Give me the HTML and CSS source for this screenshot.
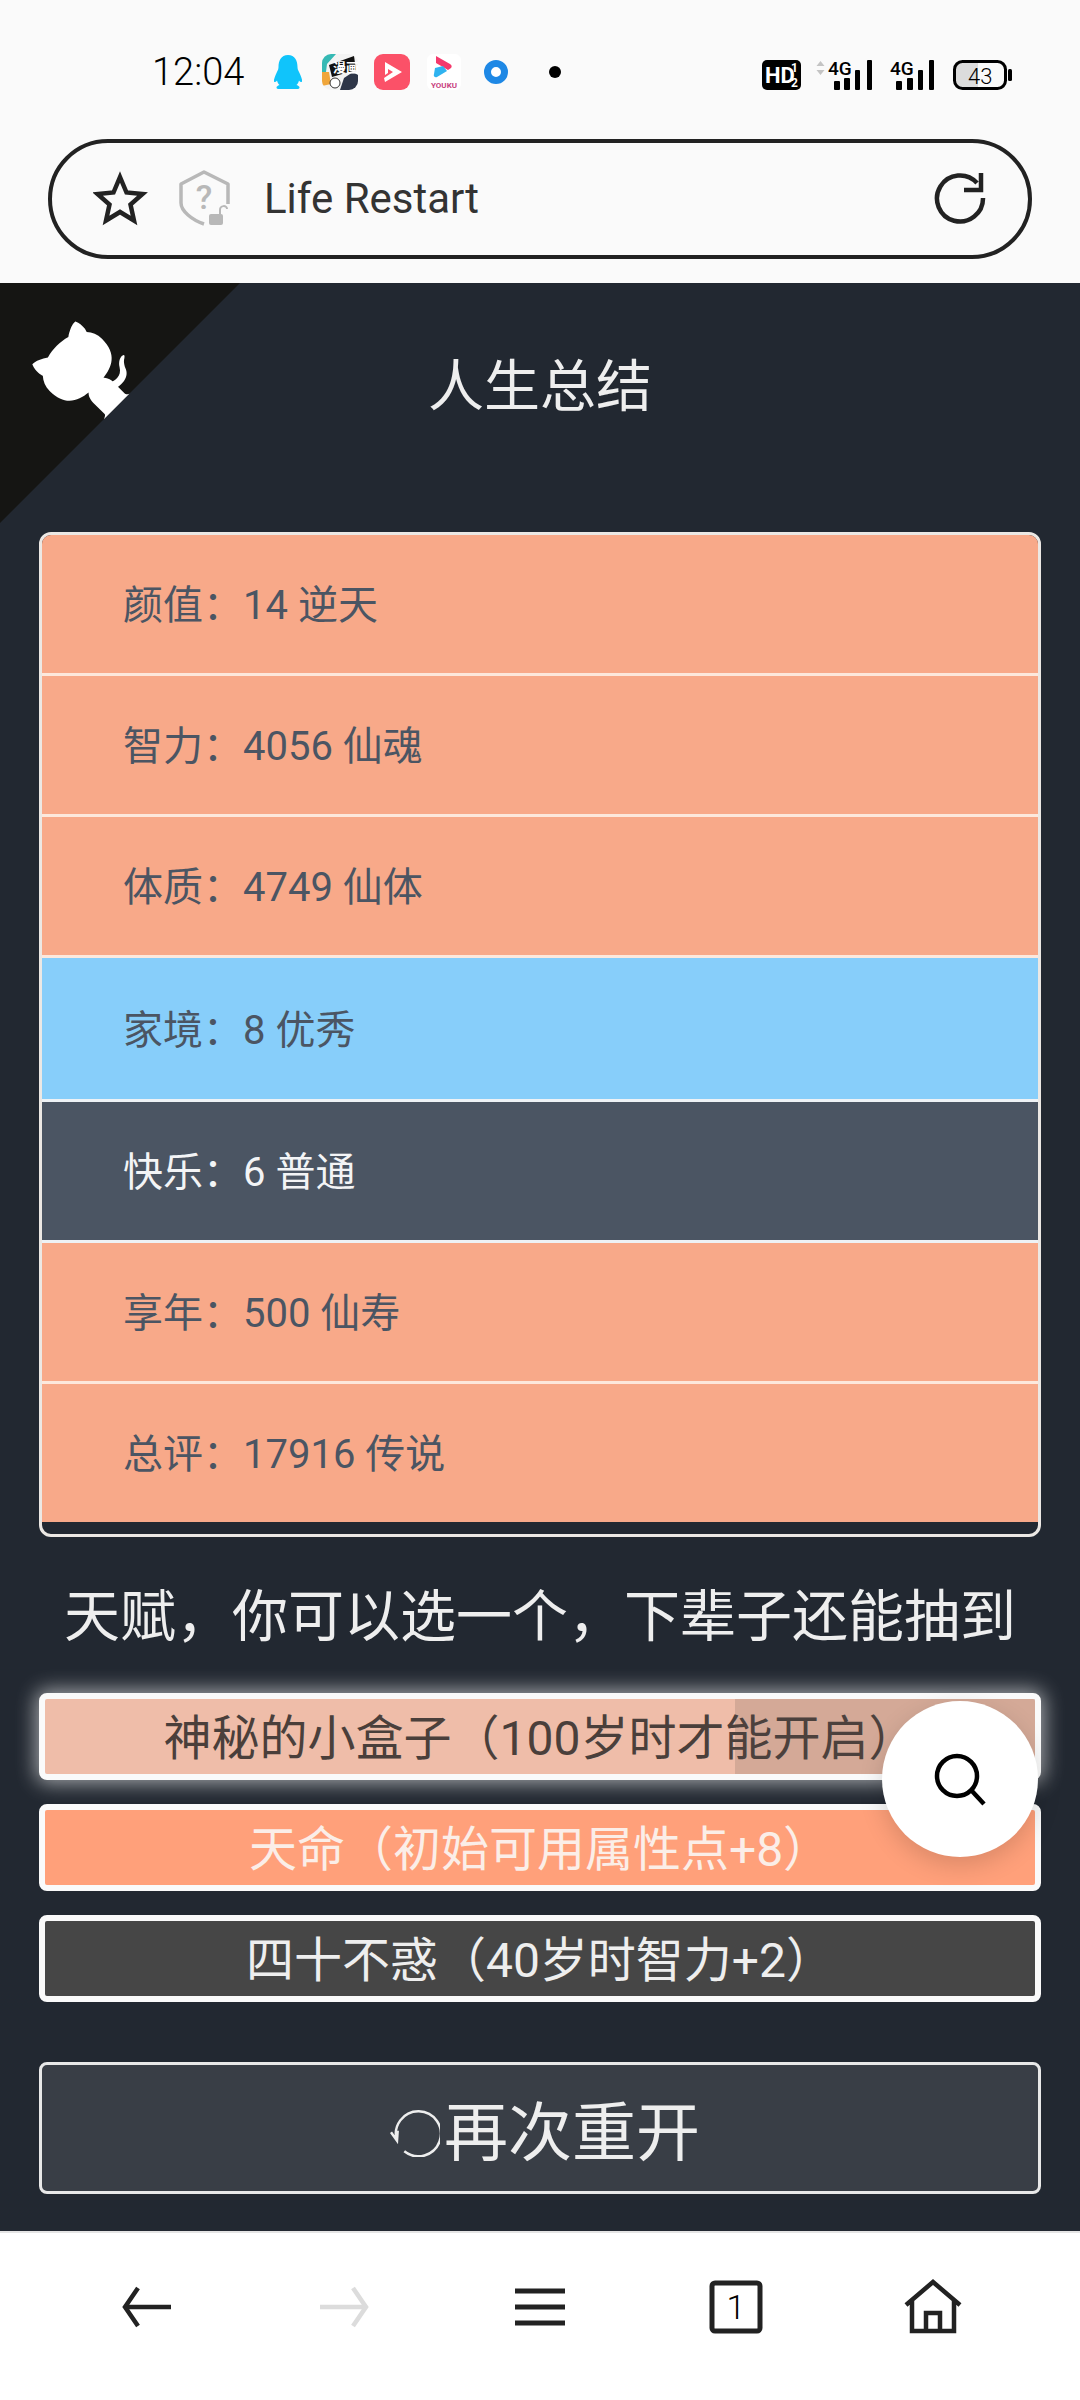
FILE: index.html
```html
<!DOCTYPE html>
<html lang="zh-CN">
<head>
    <meta charset="UTF-8">
    <meta name="viewport" content="width=device-width, initial-scale=1.0">
    <title>Life Restart</title>
    <link rel="stylesheet" href="styles.css">
</head>
<body>
    <div class="phone">
        <div class="top">
            <!-- barra de status -->
            <div class="status-bar">
                <span class="clock">12:04</span>
                <div class="notify-icons">
                    <svg class="ic-qq" width="30" height="34" viewBox="0 0 30 34">
                        <path fill="#10c4fb" d="M15 0c7 0 9.500 6 9.500 12 0 2 .5 3 2 6 1.500 3.500 3 7 2.500 8.500-.5 1-2 .5-3-1-.5 2-1.500 3.500-2.500 4.500 2 .7 3 1.500 3 2.500 0 1-1 1.500-3 1.500H6.500c-2 0-3-.5-3-1.500s1-1.800 3-2.500c-1-1-2-2.500-2.500-4.500-1 1.500-2.500 2-3 1-.5-1.500 1-5 2.500-8.500 1.500-3 2-4 2-6C5.500 6 8 0 15 0z"/>
                    </svg>
                    <svg class="ic-manga" width="36" height="36" viewBox="0 0 36 36">
                        <defs><clipPath id="mangaClip"><rect width="36" height="36" rx="9"/></clipPath></defs>
                        <g clip-path="url(#mangaClip)">
                            <rect width="36" height="36" fill="#f3f3f3"/>
                            <path fill="#35b9b4" d="M0 0h14L5 10l-1 8H0z"/>
                            <path fill="#f0a63a" d="M0 18h7l2 12-9 2z"/>
                            <path fill="#2e3648" d="M18 36l4-12 9-6 5 3v15z"/>
                            <path fill="#111" d="M7 11l25-9 2 14-24 7z"/>
                            <circle cx="13" cy="29" r="5" fill="#fff" stroke="#333"/>
                            <text x="11" y="18" class="manga-text">漫画</text>
                        </g>
                    </svg>
                    <svg class="ic-video" width="36" height="36" viewBox="0 0 36 36">
                        <rect width="36" height="36" rx="9" fill="#fb5168"/>
                        <path fill="#fff" d="M11 8l17 10-17 10-1-4 9-6-5-3v4l-3 2z"/>
                    </svg>
                    <svg class="ic-youku" width="34" height="36" viewBox="0 0 34 36">
                        <rect width="34" height="36" rx="6" fill="#fff"/>
                        <path fill="#f5396c" d="M9 2l14 8c2 1 2 3 1 4l-3 2L9 9z"/>
                        <path fill="#2fb3f0" d="M8 14l8-2 4 5-10 6c-2 1-4-1-3-3z"/>
                        <text x="17" y="34" class="youku-text">YOUKU</text>
                    </svg>
                    <svg class="ic-ring" width="24" height="24" viewBox="0 0 24 24">
                        <circle cx="12" cy="12" r="8.500" fill="#fff" stroke="#1e88e5" stroke-width="7"/>
                    </svg>
                    <span class="dot"></span>
                </div>
                <div class="system-icons">
                    <svg class="ic-hd" width="39" height="30" viewBox="0 0 39 30">
                        <rect width="39" height="30" rx="5" fill="#000"/>
                        <text x="3" y="23" class="hd-text">HD</text>
                        <text x="29" y="12" class="hd-small">1</text>
                        <text x="29" y="27" class="hd-small">2</text>
                    </svg>
                    <svg class="signal-a" width="57" height="36" viewBox="0 -6 57 36">
                        <path fill="#c4c4c4" d="M4.500 1l4 5h-8zM4.500 15l4-5h-8z"/>
                        <text x="12" y="15" class="net-text">4G</text>
                        <rect x="18" y="21" width="6" height="9" rx="1"/>
                        <rect x="28" y="18" width="6" height="12" rx="1"/>
                        <rect x="39" y="10" width="5" height="20" rx="1"/>
                        <rect x="51" y="0" width="5" height="30" rx="1"/>
                    </svg>
                    <svg class="signal-b" width="45" height="36" viewBox="0 -6 45 36">
                        <text x="0" y="15" class="net-text">4G</text>
                        <rect x="6" y="21" width="6" height="9" rx="1"/>
                        <rect x="17" y="18" width="6" height="12" rx="1"/>
                        <rect x="28" y="10" width="5" height="20" rx="1"/>
                        <rect x="39" y="0" width="5" height="30" rx="1"/>
                    </svg>
                    <svg class="battery" width="59" height="30" viewBox="0 0 59 30">
                        <path fill="#dcdcdc" d="M3 3h22v24H3z"/>
                        <rect x="1.500" y="1.500" width="51" height="27" rx="8" fill="none" stroke="#000" stroke-width="3"/>
                        <rect x="55" y="9" width="4" height="12" rx="1.500"/>
                        <text x="15" y="24" class="battery-text">43</text>
                    </svg>
                </div>
            </div>

            <!-- barra de endereco -->
            <div class="url-bar">
                <svg class="ic-star" width="56" height="56" viewBox="0 0 56 56">
                    <path fill="none" stroke="#222" stroke-width="4.500" stroke-miterlimit="10" d="M27 7l6.500 15.500 16 1.500-12 10.500 3.500 16L27 42l-14 8.500 3.500-16L4.500 24l16-1.500z"/>
                </svg>
                <svg class="ic-shield" width="52" height="56" viewBox="0 0 52 56">
                    <path fill="none" stroke="#b8b8b8" stroke-width="3.500" stroke-linejoin="round" d="M49 34V14L25 2 2 14v19c0 8 11 17 23 21"/>
                    <text x="25" y="39" class="shield-text">?</text>
                    <rect x="30" y="44" width="14" height="11" rx="2" fill="#b8b8b8"/>
                    <path fill="none" stroke="#b8b8b8" stroke-width="2" d="M41 44v-4c0-5 7-5 7-1"/>
                </svg>
                <span class="url-text">Life Restart</span>
                <svg class="ic-reload" width="54" height="54" viewBox="0 0 54 54">
                    <path fill="none" stroke="#222" stroke-width="4.500" d="M44 12A23 23 0 1 0 50 27M48 2v17H31"/>
                </svg>
            </div>
        </div>

        <!-- pagina do jogo -->
        <div class="page">
            <svg class="corner" width="240" height="240" viewBox="0 0 250 250">
                <g transform="translate(250 0) scale(-1 1)">
                    <path fill="#151513" d="M0,0 L250,250 L250,0 Z"/>
                    <path fill="#fff" d="M128.3,109.0 C113.8,99.7 119.0,89.6 119.0,89.6 C122.0,82.7 120.5,78.6 120.5,78.6 C119.2,72.0 123.4,76.3 123.4,76.3 C127.3,80.9 125.5,87.3 125.5,87.3 C122.9,97.6 130.6,101.9 134.4,103.2"/>
                    <path fill="#fff" d="M115.0,115.0 C114.9,115.1 118.7,116.5 119.8,115.4 L133.7,101.6 C136.9,99.2 139.9,98.4 142.2,98.6 C133.8,88.0 127.5,74.4 143.8,58.0 C148.5,53.4 154.0,51.2 159.7,51.0 C160.3,49.4 163.2,43.6 171.4,40.1 C171.4,40.1 176.1,42.5 178.8,56.2 C183.1,58.6 187.2,61.8 190.9,65.4 C194.5,69.0 197.7,73.2 200.1,77.6 C213.8,80.2 216.3,84.9 216.3,84.9 C212.7,93.1 206.9,96.0 205.4,96.6 C205.1,102.4 203.0,107.8 198.3,112.5 C181.9,128.9 168.3,122.5 157.7,114.1 C157.9,116.9 156.7,120.9 152.7,124.9 L141.0,136.5 C139.8,137.7 141.6,141.9 141.8,141.8 Z"/>
                </g>
            </svg>

            <h1 class="title">人生总结</h1>

            <ul class="summary">
                <li class="row peach">颜值：14 逆天</li>
                <li class="row peach">智力：4056 仙魂</li>
                <li class="row peach">体质：4749 仙体</li>
                <li class="row blue">家境：8 优秀</li>
                <li class="row slate">快乐：6 普通</li>
                <li class="row peach">享年：500 仙寿</li>
                <li class="row peach">总评：17916 传说</li>
            </ul>

            <h2 class="subtitle">天赋，你可以选一个，下辈子还能抽到</h2>

            <div class="talents">
                <div class="talent talent-box">神秘的小盒子（100岁时才能开启）</div>
                <div class="talent talent-orange">天命（初始可用属性点+8）</div>
                <div class="talent talent-dark">四十不惑（40岁时智力+2）</div>
            </div>

            <button class="again">
                <svg width="60" height="60" viewBox="0 0 60 60">
                    <path fill="none" stroke="#eee" stroke-width="2.500" d="M24.300 54.300A22.500 22.500 0 1 0 17 43.700M11 35.300l6 8.400.7-10"/>
                </svg>
                <span>再次重开</span>
            </button>

            <div class="fab">
                <svg width="54" height="54" viewBox="0 0 54 54">
                    <circle cx="24" cy="24" r="20" fill="none" stroke="#000" stroke-width="4.500"/>
                    <path stroke="#000" stroke-width="4.500" d="M38 38l13 14"/>
                </svg>
            </div>
        </div>

        <!-- navegacao -->
        <div class="bottom-nav">
            <svg width="56" height="56" viewBox="0 0 56 56">
                <path fill="none" stroke="#222" stroke-width="4.500" d="M52 28H6M19 9L6 28l13 19"/>
            </svg>
            <svg width="56" height="56" viewBox="0 0 56 56">
                <path fill="none" stroke="#dcdcdc" stroke-width="4.500" d="M4 28h46M37 9l13 19-13 19"/>
            </svg>
            <svg width="56" height="56" viewBox="0 0 56 56">
                <path fill="none" stroke="#222" stroke-width="5" d="M3 12h50M3 28h50M3 44h50"/>
            </svg>
            <svg width="56" height="56" viewBox="0 0 56 56">
                <rect x="4" y="4" width="48" height="48" rx="3" fill="none" stroke="#222" stroke-width="5"/>
                <text x="28" y="40" class="tab-count">1</text>
            </svg>
            <svg width="60" height="56" viewBox="0 0 60 56">
                <path fill="none" stroke="#222" stroke-width="4.500" d="M3 26L30 3l27 23M9 22v30h42V22M23 52V34h14v18"/>
            </svg>
        </div>
    </div>
</body>
</html>
```

FILE: styles.css
```css
* {
    margin: 0;
    padding: 0;
    box-sizing: border-box;
}
html, body {
    width: 1080px;
    height: 2400px;
    overflow: hidden;
    font-family: Roboto, "Noto Sans CJK SC", sans-serif;
    background-color: #fff;
}
.phone {
    display: flex;
    flex-direction: column;
    height: 2400px;
}
.top {
    flex: none;
    height: 283px;
    background-color: #fafafa;
}

/* status */
.status-bar {
    height: 139px;
    display: flex;
    align-items: center;
    padding: 4px 68px 0 152px;
}
.clock {
    font-size: 38px;
    font-weight: 300;
    color: #000;
    width: 121px;
}
.notify-icons {
    display: flex;
    align-items: center;
}
.ic-manga {
    margin-left: 19px;
}
.ic-video {
    margin-left: 16px;
}
.ic-youku {
    margin-left: 17px;
}
.ic-ring {
    margin-left: 23px;
}
.dot {
    width: 12px;
    height: 12px;
    margin-left: 41px;
    background: #000;
    border-radius: 50%;
}
.system-icons {
    display: flex;
    align-items: flex-end;
    margin-left: auto;
}
.signal-a {
    margin-left: 15px;
}
.signal-b {
    margin-left: 17px;
}
.battery {
    margin-left: 18px;
}
.manga-text {
    font-size: 13px;
    font-weight: 700;
    fill: #fff;
}
.youku-text {
    font-size: 8px;
    font-weight: 700;
    text-anchor: middle;
    fill: #c8437f;
}
.hd-text {
    font-size: 22px;
    font-weight: 700;
    fill: #fff;
}
.hd-small {
    font-size: 12px;
    font-weight: 700;
    fill: #fff;
}
.net-text {
    font-size: 19px;
    font-weight: 500;
    fill: #000;
}
.battery-text {
    font-size: 22px;
    font-weight: 300;
    fill: #000;
}

/* url */
.url-bar {
    height: 120px;
    margin: 0 48px;
    border: 4px solid #222;
    border-radius: 60px;
    display: flex;
    align-items: center;
    padding: 0 41px 2px;
}
.ic-shield {
    margin-left: 30px;
}
.url-text {
    margin-left: 33px;
    font-size: 42px;
    color: #333;
}
.ic-reload {
    margin-left: auto;
}
.shield-text {
    font-size: 34px;
    font-weight: 500;
    text-anchor: middle;
    fill: #b8b8b8;
}

/* pagina */
.page {
    flex: 1;
    position: relative;
    background-color: #222831;
    padding: 62px 39px 0;
    overflow: hidden;
}
.corner {
    position: absolute;
    top: 0;
    left: 0;
}
.title {
    font-size: 56px;
    font-weight: 400;
    line-height: 84px;
    text-align: center;
    color: #eeeeee;
    margin-bottom: 103px;
}
.summary {
    list-style: none;
    border: 3px solid #ece8e4;
    border-radius: 12px;
    padding-bottom: 12px;
    overflow: hidden;
}
.row {
    height: 141px;
    display: flex;
    align-items: center;
    padding: 0 0 5px 81px;
    font-size: 40px;
    color: #4b5563;
    border-bottom: 3px solid #fde8dc;
}
.row:last-child {
    height: 138px;
    border-bottom: none;
}
.row.blue {
    height: 144px;
    padding-bottom: 3px;
    border-bottom-color: #eef2f5;
}
.peach {
    background-color: #f8a989;
}
.blue {
    background-color: #87cefa;
}
.slate {
    background-color: #4b5563;
    color: #f3f4f6;
    border-bottom-color: #eef2f5;
}
.subtitle {
    margin-top: 38px;
    font-size: 56px;
    font-weight: 400;
    line-height: 84px;
    text-align: center;
    color: #eeeeee;
    white-space: nowrap;
}
.talents {
    margin-top: 34px;
    display: flex;
    flex-direction: column;
    gap: 24px;
}
.talent {
    height: 87px;
    border: 6px solid #fafafa;
    border-radius: 8px;
    padding-bottom: 6px;
    display: flex;
    align-items: center;
    justify-content: center;
    font-size: 48px;
    position: relative;
    white-space: nowrap;
}
.talent-box {
    background-color: #efbda9;
    color: #4a3f3b;
    box-shadow: 0 0 20px 3px rgba(255, 255, 255, 0.6);
}
.talent-box::after {
    content: "";
    position: absolute;
    top: 0;
    bottom: 0;
    right: 0;
    width: 300px;
    background-color: rgba(90, 80, 70, 0.18);
}
.talent-orange {
    background-color: #ffa07a;
    color: #fbeee8;
}
.talent-dark {
    background-color: #464646;
    color: #eeeeee;
}
.again {
    margin-top: 60px;
    width: 100%;
    height: 132px;
    border: 3px solid #e8e8e8;
    border-radius: 8px;
    padding-bottom: 2px;
    background-color: #393e46;
    color: #eeeeee;
    font-family: inherit;
    font-size: 64px;
    display: flex;
    align-items: center;
    justify-content: center;
    gap: 4px;
}
.fab {
    position: absolute;
    left: 882px;
    top: 1418px;
    width: 156px;
    height: 156px;
    border-radius: 50%;
    background: #fff;
    box-shadow: 0 8px 24px rgba(0, 0, 0, 0.15);
    display: flex;
    align-items: center;
    justify-content: center;
}

/* navegacao */
.bottom-nav {
    height: 169px;
    flex: none;
    background-color: #fff;
    border-top: 2px solid #e4e4e4;
    display: grid;
    grid-template-columns: repeat(5, 196.400px);
    justify-items: center;
    align-items: center;
    padding: 0 49px 20px;
}
.tab-count {
    font-size: 34px;
    font-weight: 300;
    text-anchor: middle;
    fill: #000;
}
```
